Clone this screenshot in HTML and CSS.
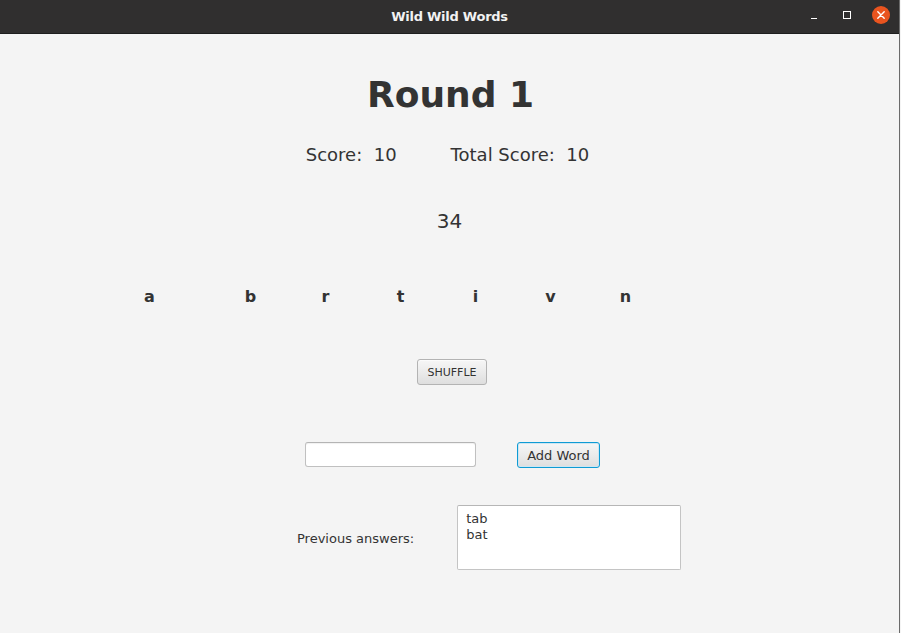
FILE: index.html
```html
<!DOCTYPE html>
<html>
<head>
<meta charset="utf-8">
<title>Wild Wild Words</title>
<link rel="stylesheet" href="styles.css">
</head>
<body>
<div class="window">
  <header class="titlebar">
    <span class="title">Wild Wild Words</span>
    <div class="controls">
      <svg class="ctl min" width="10" height="10" viewBox="0 0 10 10"><line x1="2" y1="8.5" x2="8" y2="8.5" stroke="#ffffff" stroke-width="1"/></svg>
      <svg class="ctl max" width="10" height="10" viewBox="0 0 10 10"><rect x="1.5" y="1.5" width="7" height="7" fill="none" stroke="#ffffff" stroke-width="1"/></svg>
      <svg class="ctl close" width="18" height="18" viewBox="0 0 18 18"><circle cx="9" cy="9" r="9" fill="#e9541f"/><path d="M5.8 5.8 L12.2 12.2 M12.2 5.8 L5.8 12.2" stroke="#ffffff" stroke-width="1.4" stroke-linecap="round"/></svg>
    </div>
  </header>
  <main class="content">
    <h1 class="round">Round 1</h1>
    <div class="scores">
      <span class="score">Score:  10</span>
      <span class="score">Total Score:  10</span>
    </div>
    <div class="timer">34</div>
    <div class="letters">
      <span class="letter first">a</span>
      <span class="letter">b</span>
      <span class="letter">r</span>
      <span class="letter">t</span>
      <span class="letter">i</span>
      <span class="letter">v</span>
      <span class="letter">n</span>
    </div>
    <div class="shuffle-row">
      <button class="btn shuffle">SHUFFLE</button>
    </div>
    <div class="entry-row">
      <input class="word-input" type="text">
      <button class="btn add focused">Add Word</button>
    </div>
    <div class="answers-row">
      <span class="answers-label">Previous answers:</span>
      <div class="answers-box">
        <div>tab</div>
        <div>bat</div>
      </div>
    </div>
  </main>
</div>
</body>
</html>
```

FILE: styles.css
```css
* { box-sizing: border-box; }
html, body {
  margin: 0;
  padding: 0;
  width: 901px;
  height: 633px;
  overflow: hidden;
  background: #f4f4f4;
  font-family: "DejaVu Sans", sans-serif;
  color: #333333;
}
.window {
  width: 900px;
  height: 633px;
  border-right: 1px solid #6b6b6b;
  background: #f4f4f4;
  display: flex;
  flex-direction: column;
}
.titlebar {
  position: relative;
  height: 34px;
  flex: none;
  background: #302f2f;
  border-bottom: 1px solid #1e1e1e;
  display: flex;
  align-items: center;
  justify-content: center;
}
.title {
  font-family: "DejaVu Sans", sans-serif;
  font-weight: bold;
  font-size: 13px;
  letter-spacing: -0.25px;
  color: #f2f2f2;
}
.controls {
  position: absolute;
  right: 9px;
  top: 6px;
  display: flex;
  align-items: center;
}
.ctl { display: block; }
.min { margin-right: 23px; }
.max { margin-right: 20px; }
.content {
  flex: 1;
  display: flex;
  flex-direction: column;
}
.round {
  margin: 40px 0 0 0;
  text-align: center;
  font-size: 36px;
  line-height: 42px;
  font-weight: bold;
  color: #333333;
  padding-left: 2px;
}
.scores {
  margin-top: 28px;
  display: flex;
  justify-content: center;
  gap: 54px;
  font-size: 18px;
  line-height: 21px;
  padding-right: 4px;
}
.score { white-space: pre; }
.timer {
  margin-top: 44px;
  text-align: center;
  font-size: 20px;
  line-height: 24px;
}
.letters {
  margin-top: 54px;
  display: flex;
  padding-left: 112px;
  font-weight: bold;
  font-size: 16px;
  line-height: 19px;
}
.letter {
  width: 75px;
  text-align: center;
}
.letter.first { margin-right: 26px; }
.shuffle-row {
  margin-top: 53px;
  display: flex;
  padding-left: 417px;
}
.btn {
  font-family: "DejaVu Sans", sans-serif;
  color: #333333;
  border: 1px solid #b3b3b3;
  border-radius: 3px;
  background: linear-gradient(to bottom, #f6f6f6 0%, #ebebeb 50%, #dedede 100%);
  box-shadow: inset 0 1px 0 #fbfbfb;
  height: 25px;
  padding: 0;
}
.shuffle {
  width: 70px;
  height: 26px;
  font-size: 11px;
}
.entry-row {
  margin-top: 57px;
  display: flex;
  padding-left: 305px;
  gap: 42px;
}
.word-input {
  width: 171px;
  height: 25px;
  border: 1px solid #c0c0c0;
  border-top-color: #b4b4b4;
  border-radius: 3px;
  background: #ffffff;
  box-shadow: inset 0 1px 1px rgba(0,0,0,0.06);
  margin: 0;
  padding: 0 6px;
  font-family: "DejaVu Sans", sans-serif;
  font-size: 13px;
}
.add {
  width: 83px;
  height: 26px;
  font-size: 13px;
}
.entry-row .add { margin-left: -1px; }
.add.focused {
  border: 1px solid #0f9bd4;
  box-shadow: inset 0 0 0 1px #cde6f2;
}
.answers-row {
  margin-top: 37px;
  display: flex;
  align-items: center;
  padding-left: 297px;
  gap: 43px;
}
.answers-label {
  font-size: 13px;
  line-height: 16px;
  padding-top: 2px;
}
.answers-box {
  width: 224px;
  height: 65px;
  background: #ffffff;
  border: 1px solid #c4c4c4;
  border-top-color: #b6b6b6;
  border-radius: 2px;
  padding: 5px 8px;
  font-size: 13px;
  line-height: 16px;
  color: #333333;
}
```
